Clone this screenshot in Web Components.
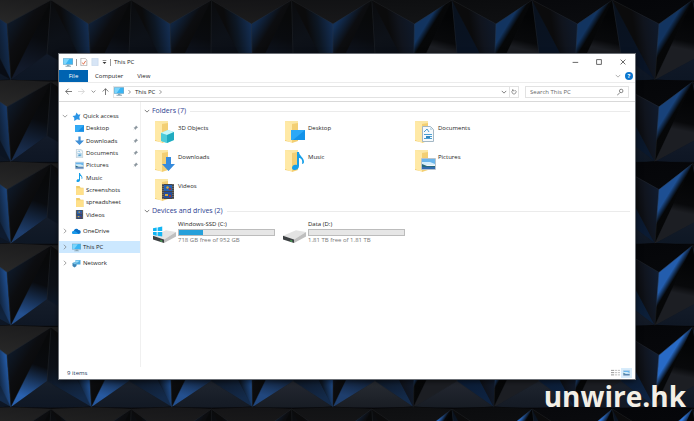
<!DOCTYPE html>
<html lang="en">
<head>
<meta charset="utf-8">
<title>This PC</title>
<style>
html, body { margin: 0; height: 100%; background: #0b0d12; }
body { font: 6px/12px "Open Sans", "Noto Sans", sans-serif; color: #1c1c1c; }
</style>
</head>
<body>
<desk-top></desk-top>
<script>
const define = (name, css, render) => customElements.define(name, class extends HTMLElement {
  connectedCallback() {
    if (this.shadowRoot) return;
    const template = document.createElement('template');
    template.innerHTML = `<style>:host,*{box-sizing:border-box}button,input{font:inherit;color:inherit;margin:0;padding:0;border:0;background:none}button{display:flex;align-items:center;justify-content:center}${css}</style>${render(this)}`;
    this.attachShadow({ mode: 'open' }).append(template.content.cloneNode(true));
  }
});

/* Icons: [viewBox, markup] */
const folder = '<path fill="#f0cc6c" d="M2 1l6 1v20l-6-1z"/><path fill="#fbe7a4" d="M2 1h13v20H8z"/><path fill="#ffe9a6" d="M2 1l7 3v19l-7-3z"/><path fill="#f3cf73" d="M9 4l6-1v18l-6 2z"/>';
const film = '<path fill="#464646" d="M0 0h12v15H0z"/><path fill="#2462b5" d="M2 1h8v6H2z"/><path fill="#244f9b" d="M2 8h8v6H2z"/><path fill="#d7a83b" d="M5 2l2 1-1 2-2-1zM3 10h3v2H3z"/><path fill="#a03535" d="M7 4h2v2H7zM7 11h2v2H7z"/><path stroke="#888" stroke-dasharray="1 1" d="M1 0v15M11 0v15"/>';
const note = '<path fill="#159fe8" d="M5 0h2c0 4 5 5 5 10 0 1-1 2-2 2 1-4-1-6-3-6v8c0 5-7 5-7 2 0-3 3-4 5-3z"/>';
const arrow = '<path fill="#368bdc" d="M4 0h5v7h4l-6.500 7L0 7h4z"/>';
const monitor = '<path fill="#83a8bd" d="M0 0h20v13H0z"/><path fill="#39b5f4" d="M1 1h18v11H1z"/><path fill="#7dd5fb" d="M1 1h12L5 12H1z"/><path fill="#8aa6b5" d="M8 13h5v2h3v2H5v-2h3z"/>';
const landscape = '<path fill="#f4f6f8" stroke="#b9c3ca" d="M.5.5h14v11H.5z"/><path fill="#69b5ec" d="M1 1h13v6H1z"/><path fill="#d5eefa" d="M1 4h8l5 2v1H1z"/><path fill="#28697a" d="M1 6l5 2h8v1H1z"/><path fill="#326cb0" d="M1 9h13v2H1z"/>';
const sheet = '<path fill="#f7fafc" stroke="#a3b7c4" d="M.5.5h8l3 3v12H.5z"/><path fill="#c6dbe7" d="M8 1v3h3z"/><path stroke="#4b9fd2" fill="none" d="M2 6l3-3 2 3M2 8.500h8M6 10.500h4M2 12.500h8"/><path fill="#3187bd" d="M4 10h4v2H4z"/>';
const drive = '<path fill="#e3e3e3" d="M1 9l14-6 11 2-13 8z"/><path fill="#bfbfbf" d="M13 13l13-8v5l-13 7z"/><path fill="#3d4143" d="M1 9l12 4v4L1 13z"/><path fill="#50dd60" d="M9 14l2 .6v1L9 15z"/>';
const at = (x, y, s, m) => `<g transform="translate(${x} ${y}) scale(${s})">${m}</g>`;
const line = (d, c = '#555', w = 1) => `<path fill="none" stroke="${c}" stroke-width="${w}" d="${d}"/>`;
const ICONS = {
  'folder-cube': ['0 0 24 24', folder + '<path fill="#8be8f0" d="M8 13l7-3 6 2v8l-7 3-6-2z"/><path fill="#c5f8fa" d="M8 13l7-3 6 2-7 3z"/><path fill="#20abc0" d="M14 15l7-3v8l-7 3z"/><path fill="#4dccd9" d="M8 13l6 2v8l-6-2z"/>'],
  'folder-desktop': ['0 0 24 24', folder + '<path fill="#1392e9" d="M8 10h14v10H8z"/><path fill="#2ba8f7" d="M8 10h14L10 20H8z"/>'],
  'folder-document': ['0 0 24 24', folder + at(9, 6, 1, sheet)],
  'folder-download': ['0 0 24 24', folder + at(9, 8, 1, arrow)],
  'folder-music': ['0 0 24 24', folder + at(9, 3, 1, note)],
  'folder-picture': ['0 0 24 24', folder + at(8, 9, 1, landscape)],
  'folder-video': ['0 0 24 24', folder + at(9, 6, 1, film)],
  drive: ['2 0 24 24', at(0, 7, 1, drive)],
  'windows-drive': ['2 0 24 24', at(0, 7, 1, drive) + '<path fill="#12b5f3" d="M1 8l4-1v4H1zM6 7l5-1v5H6zM1 12h4v4l-4-1zM6 12h5v5l-5-1z"/>'],
  pc: ['0 0 20 17', monitor],
  star: ['0 0 16 16', '<path fill="#2994e5" d="M8 1l3 4 4-1-2 5 1 5-5-1-5 3 0-6-3-3 5-1z"/>'],
  desktop: ['0 0 16 16', '<path fill="#168ee5" d="M0 2h16v12H0z"/><path fill="#33aaf5" d="M0 2h16L4 14H0z"/>'],
  download: ['0 0 16 16', '<path fill="#3f8fd6" d="M6 1h4v7h6l-8 8-8-8h6z"/>'],
  document: ['0 0 12 16', sheet],
  picture: ['0 0 15 12', landscape],
  music: ['0 0 12 18', note],
  folder: ['0 0 16 16', '<path fill="#f0cb68" d="M2 0h6l2 3h5v13H2z"/><path fill="#ffe08a" d="M2 4h13v12H2z"/>'],
  video: ['0 0 12 15', film],
  cloud: ['0 0 18 12', '<path fill="#0a70c8" d="M4 11a4 4 0 0 1 0-7 5 5 0 0 1 9-1 4 4 0 0 1 1 8z"/><path fill="#1b9ae9" d="M2 11a3 3 0 0 1 2-6c4 0 6 3 10 6z"/>'],
  network: ['0 0 18 16', '<path fill="#4aa9df" d="M7 1h10v9H7z"/><path fill="#9bdcf8" d="M8 2h8L8 8z"/><path fill="#3b83b4" d="M1 7l8-1v7l-4 3-4-3z"/><path fill="#76c2e8" d="M1 7l4-2 6 2-5 3z"/>'],
  pin: ['0 0 10 10', '<path fill="#8b969e" d="M6 0l4 4-2 1-2 2v2L3.500 6.500 0 10l3-4L1 4h2l2-2z"/>'],
  right: ['0 0 8 8', line('M2.500 1L5.500 4 2.500 7')],
  down: ['0 0 8 8', line('M1 2.500L4 5.500 7 2.500')],
  back: ['0 0 10 10', line('M5 1L1 5l4 4M1 5h9', '#444')],
  forward: ['0 0 10 10', line('M5 1l4 4-4 4M9 5H0', '#ccc')],
  up: ['0 0 10 10', line('M1 5l4-4 4 4M5 1v9', '#444')],
  check: ['0 0 12 14', '<path fill="#fff" stroke="#8b8b8b" d="M.5.5H8l3 3v10H.5z"/>' + line('M3 8l2 3 4-6', '#dc5a32', 1.5)],
  page: ['0 0 12 14', '<path fill="#d7e5f6" stroke="#c4d5e9" d="M.5.5h11v13H.5z"/>'],
  customize: ['0 0 8 8', '<path fill="#333" d="M1 1h6v1H1zM1 4h6L4 7z"/>'],
  min: ['0 0 10 10', line('M2 5.500h7', '#444')],
  max: ['0 0 10 10', line('M2 2h6v6H2z', '#444')],
  close: ['0 0 10 10', line('M2 2l6 6M8 2L2 8', '#444')],
  refresh: ['0 0 10 10', line('M7 2a3.500 3.500 0 1 1-4 0M3 0v3h3', '#555')],
  search: ['0 0 10 10', line('M4 6L0 10M6 1a2.500 2.500 0 1 1 0 5 2.500 2.500 0 0 1 0-5z', '#555')],
  details: ['0 0 12 10', line('M0 1.500h4M0 4.500h4M0 7.500h4', '#777') + line('M5 1.500h3M9 1.500h3M5 4.500h3M9 4.500h3M5 7.500h3M9 7.500h3', '#aaa')]
};

define('ui-icon', ':host{display:block;flex:none;width:8px;height:8px}svg{display:block;width:100%;height:100%}', el => {
  const [box, body] = ICONS[el.getAttribute('name')];
  return `<svg viewBox="${box}" aria-hidden="true">${body}</svg>`;
});

/* Wallpaper: a lattice of pyramids lit by a blue light from below. */
define('wall-paper', ':host{display:block}svg{display:block;width:100%;height:100%}', () => {
  const mix = (a, b, t) => 'rgb(' + a.map((v, i) => Math.round(v + (b[i] - v) * t)) + ')';
  const poly = (pts, fill) => `<polygon fill="${fill}" stroke="${fill}" stroke-width=".4" points="${pts.join(' ')}"/>`;
  let out = '', defs = '';
  const A = (c, r) => [51 + 80.2 * c, 81.8 * r];
  const J = (c, r) => [7 + 81.5 * c, 81.8 * r + 24 + r];
  const B = (c, r) => [11 + 80.5 * c, 81.8 * r + 80];
  const C = (c, r) => [47 + 82 * c, 81.8 * r + 54];
  const grad = (id, p, q, stops) => {
    defs += `<linearGradient id="${id}" gradientUnits="userSpaceOnUse" x1="${p[0]}" y1="${p[1]}" x2="${q[0]}" y2="${q[1]}">${stops.map(([o, c]) => `<stop offset="${o}" stop-color="${c}"/>`).join('')}</linearGradient>`;
    return `url(#${id})`;
  };
  for (let r = 0; r < 6; r++) for (let c = -1; c < 10; c++) {
    const k = `${c + 1}_${r}`, x = Math.max(0, Math.min(1, c / 8)), y = r / 5;
    const a = A(c, r), al = A(c - 1, r), j = J(c, r), b = B(c, r), bn = B(c + 1, r), cc = C(c, r);
    const mid = (p, q, t) => [p[0] + (q[0] - p[0]) * t, p[1] + (q[1] - p[1]) * t];
    out += poly([al, B(c, r - 1), a, j], grad('t' + k, B(c, r - 1), j, [[0, mix([29, 29, 30], [5, 6, 9], x)], [1, mix([40, 40, 40], [7, 8, 11], x)]]));
    const blueL = mix([20, 48, 88], [42, 110, 204], y);
    const blueR = mix([18, 52, 96], [46, 120, 224], y);
    const soft = mix([15, 26, 44], [18, 32, 56], y);
    out += poly([al, j, b], grad('l' + k, [j[0] - 24, j[1] + 12], [j[0] + 2, j[1] + 8],
      [[0, '#0b0b0c'], [.4, x > .6 ? '#10141d' : '#0d1724'], [1, x > .6 ? soft : blueL]]));
    out += poly([j, a, b], grad('r' + k, [j[0] - 2, j[1] + 8], [j[0] + 24, j[1] + 24],
      x > .5 ? [[0, blueR], [.25, blueR], [.45, '#060708'], [1, '#050607']] : [[0, mix([14, 24, 38], [18, 48, 88], x * 2)], [.5, '#0c0d10'], [1, '#090909']]));
    out += poly([a, b, cc], grad('m' + k, mid(a, b, .2), mid(cc, b, .6),
      x > .5 ? [[0, '#030405'], [.45, '#08090b'], [.6, '#1c1e23'], [1, '#1c1e23']]
             : [[0, '#08090a'], [.4, '#090b0f'], [1, mix([18, 26, 42], [48, 116, 210], y * (1 - x))]]));
    out += poly([a, cc, bn], grad('n' + k, a, mid(cc, bn, .7),
      x > .5 ? [[0, '#09111c'], [1, mix([9, 20, 38], [14, 38, 70], y)]] : [[0, '#0a0b0d'], [.5, '#0d1118'], [1, mix([8, 12, 20], [22, 50, 88], y)]]));
    const mc = Math.max(0, 1 - Math.abs(c - 4) / 5);
    out += poly([b, cc, bn], grad('c' + k, cc, [cc[0], cc[1] + 26],
      [[0, mix([18, 26, 40], [46, 48, 54], mc * y)], [1, mix([13, 22, 36], [28, 31, 36], mc * y)]]));
    out += `<path fill="none" stroke="#3a3d42" stroke-opacity=".35" stroke-width=".7" d="M${al}L${j}L${a}L${cc}M${j}L${b}"/>`;
    out += `<path fill="none" stroke="#020304" stroke-opacity=".8" stroke-width="1.2" d="M${b}Q${cc[0]},${b[1] + 3} ${bn}"/>`;
  }
  return `<svg viewBox="0 0 694 421" preserveAspectRatio="xMidYMid slice" aria-hidden="true"><defs>${defs}</defs>${out}</svg>`;
});

define('title-bar', `
  :host{display:flex;align-items:center;height:16px;padding:0 0 0 4px;gap:3px}
  button{width:24px;height:16px}
  .quick{width:8px;height:12px}
  .quick.last{width:5px}
  .last ui-icon{width:5px}
  i{width:1px;height:7px;background:#999}
  h1{font:inherit;margin:0;flex:1}
  .pc{width:10px;height:9px}
  nav{display:flex}
`, () => `<ui-icon class="pc" name="pc"></ui-icon><i></i>
  <button class="quick" aria-label="Properties"><ui-icon name="check"></ui-icon></button>
  <button class="quick" aria-label="New folder"><ui-icon name="page"></ui-icon></button>
  <button class="quick last" aria-label="Customize toolbar"><ui-icon name="customize"></ui-icon></button><i></i>
  <h1>This PC</h1>
  <nav><button aria-label="Minimize"><ui-icon name="min"></ui-icon></button><button aria-label="Maximize"><ui-icon name="max"></ui-icon></button><button aria-label="Close"><ui-icon name="close"></ui-icon></button></nav>`);

define('ribbon-tabs', `
  :host{display:flex;align-items:center;height:12px}
  button{height:12px;padding:0 7px}
  .file{background:#0063b1;color:#fff;width:29px;padding:0}
  .fold{margin-left:auto;padding:0 4px}
  .fold ui-icon{width:6px;opacity:.6}
  .help{width:8px;height:8px;padding:0;margin-right:2px;border-radius:50%;background:#0b75ce;color:#fff;font-weight:700}
`, () => `<button class="file">File</button><button>Computer</button><button>View</button>
  <button class="fold" aria-label="Collapse ribbon"><ui-icon name="down"></ui-icon></button><button class="help" aria-label="Help">?</button>`);

define('address-bar', `
  :host{display:flex;align-items:center;height:20px;padding:0 6px 1px;border-top:1px solid #ececec;border-bottom:1px solid #d9d9d9}
  button{height:12px}
  .arrows{display:flex;gap:6px;width:48px;align-items:center}
  .arrows ui-icon{width:7px;height:7px}
  .arrows .small{width:5px}
  .path{display:flex;align-items:center;flex:1;height:12px;border:1px solid #e2e2e2}
  .path .pc{width:10px;height:9px}
  .sep{width:5px;margin:0 3px}
  .drop{margin-left:auto;padding:0 2px}
  .refresh{padding:0 1px;border-left:1px solid #e2e2e2;height:10px}
  .drop ui-icon,.refresh ui-icon{width:6px}
  label{display:flex;align-items:center;width:104px;height:12px;border:1px solid #e2e2e2;margin-left:6px;padding:0 4px}
  input{flex:1;width:0;outline:0}
  input::placeholder{color:#666;opacity:1}
  label ui-icon{width:7px}
`, () => `<div class="arrows"><button aria-label="Back"><ui-icon name="back"></ui-icon></button><button aria-label="Forward"><ui-icon name="forward"></ui-icon></button><button aria-label="Recent"><ui-icon class="small" name="down"></ui-icon></button><button aria-label="Up"><ui-icon name="up"></ui-icon></button></div>
  <div class="path"><ui-icon class="pc" name="pc"></ui-icon><ui-icon class="sep" name="right"></ui-icon><button>This PC</button><ui-icon class="sep" name="right"></ui-icon>
  <button class="drop" aria-label="Previous locations"><ui-icon name="down"></ui-icon></button><button class="refresh" aria-label="Refresh"><ui-icon name="refresh"></ui-icon></button></div>
  <label><input type="text" placeholder="Search This PC" aria-label="Search This PC"><ui-icon name="search"></ui-icon></label>`);

define('nav-item', `
  :host{display:block}
  a{display:flex;align-items:center;height:100%;color:inherit;text-decoration:none;padding:0 2px 0 3px;gap:2px;white-space:nowrap}
  .chev{width:6px;height:6px;margin-right:2px;opacity:.7}
  :host([child]) a{padding-left:16px}
  :host([selected]) a{background:#cce8ff}
  .ico{width:9px;height:9px}
  .pin{width:5px;height:6px;margin-left:auto}
`, el => `<a href="#">${el.hasAttribute('child') ? '' : `<ui-icon class="chev" name="${el.hasAttribute('open') ? 'down' : 'right'}"></ui-icon>`}<ui-icon class="ico" name="${el.getAttribute('icon')}"></ui-icon><slot></slot>${el.hasAttribute('pinned') ? '<ui-icon class="pin" name="pin"></ui-icon>' : ''}</a>`);

define('nav-pane', `
  :host{display:flex;flex-direction:column;gap:4px;width:82px;flex:none;padding-top:8px;border-right:1px solid #f0f0f0}
  nav{display:grid;grid-auto-rows:1fr;height:111px}
  nav~nav{height:auto;grid-auto-rows:12px}
`, () => `<nav aria-label="Quick access">
    <nav-item icon="star" open>Quick access</nav-item>
    <nav-item child icon="desktop" pinned>Desktop</nav-item>
    <nav-item child icon="download" pinned>Downloads</nav-item>
    <nav-item child icon="document" pinned>Documents</nav-item>
    <nav-item child icon="picture" pinned>Pictures</nav-item>
    <nav-item child icon="music">Music</nav-item>
    <nav-item child icon="folder">Screenshots</nav-item>
    <nav-item child icon="folder">spreadsheet</nav-item>
    <nav-item child icon="video">Videos</nav-item>
  </nav>
  <nav><nav-item icon="cloud">OneDrive</nav-item></nav>
  <nav><nav-item icon="pc" selected>This PC</nav-item></nav>
  <nav><nav-item icon="network">Network</nav-item></nav>`);

define('item-group', `
  :host{display:block}
  h2{display:flex;align-items:center;gap:4px;margin:0;font:inherit;font-size:7px;line-height:12px;color:#2c3e8f;padding-left:1px}
  h2 ui-icon{width:6px;margin-right:-2px}
  h2::after{content:"";flex:1;height:1px;background:#ebebeb}
  div{display:grid;grid-template-columns:repeat(auto-fill,130px);grid-auto-rows:29px;padding:3px 0 0 10px}
`, el => `<h2><ui-icon name="down"></ui-icon>${el.getAttribute('label')}</h2><div><slot></slot></div>`);

define('folder-tile', `
  :host{display:flex;gap:1px}
  ui-icon{width:24px;height:24px}
  span{padding-top:2px}
`, el => `<ui-icon name="${el.getAttribute('icon')}"></ui-icon><span><slot></slot></span>`);

define('drive-tile', `
  :host{display:flex;gap:1px}
  ui-icon{width:24px;height:24px}
  svg{overflow:visible}
  div{flex:none;width:97px}
  span{display:block;line-height:8px}
  .bar{height:7px;margin-top:1px;border:1px solid #bcbcbc;background:#e6e6e6}
  .bar b{display:block;height:100%;background:#26a0da}
  .free{color:#777;line-height:9px}
`, el => `<ui-icon name="${el.getAttribute('icon')}"></ui-icon><div><span><slot></slot></span><div class="bar"><b style="width:${el.getAttribute('used')}%"></b></div><span class="free">${el.getAttribute('free')}</span></div>`);
ICONS.drive[0] = ICONS['windows-drive'][0] = '1 0 26 24';

define('status-bar', `
  :host{display:flex;align-items:center;height:12px;padding:0 3px 0 8px;color:#1e395b}
  span{flex:1}
  button{width:11px;height:10px}
  ui-icon{width:9px}
  .on{background:#d8ecfb}
  .on ui-icon{width:7px}
`, () => `<span>9 items</span><button aria-label="Details"><ui-icon name="details"></ui-icon></button><button class="on" aria-label="Large icons"><ui-icon name="picture"></ui-icon></button>`);

define('explorer-window', `
  :host{display:flex;flex-direction:column;background:#fff;box-shadow:0 0 0 1px #6b6f75,0 2px 6px #000a}
  .body{display:flex;flex:1;min-height:0}
  main{flex:1;min-width:0;padding:3px 5px 0 2px}
  item-group+item-group{margin-top:-2px}
`, () => `<title-bar></title-bar><ribbon-tabs></ribbon-tabs><address-bar></address-bar>
  <div class="body"><nav-pane></nav-pane><main>
    <item-group label="Folders (7)">
      <folder-tile icon="folder-cube">3D Objects</folder-tile>
      <folder-tile icon="folder-desktop">Desktop</folder-tile>
      <folder-tile icon="folder-document">Documents</folder-tile>
      <folder-tile icon="folder-download">Downloads</folder-tile>
      <folder-tile icon="folder-music">Music</folder-tile>
      <folder-tile icon="folder-picture">Pictures</folder-tile>
      <folder-tile icon="folder-video">Videos</folder-tile>
    </item-group>
    <item-group label="Devices and drives (2)">
      <drive-tile icon="windows-drive" used="25" free="718 GB free of 952 GB">Windows-SSD (C:)</drive-tile>
      <drive-tile icon="drive" used="0" free="1.81 TB free of 1.81 TB">Data (D:)</drive-tile>
    </item-group>
  </main></div><status-bar></status-bar>`);

define('desk-top', `
  :host{position:relative;display:flex;min-height:100vh;padding:54px 59px 42px}
  wall-paper{position:absolute;inset:0}
  explorer-window{position:relative;flex:1}
  .mark{position:absolute;right:8px;bottom:9px;font-size:28px;line-height:32px;font-weight:700;color:#f3efe6}
`, () => `<wall-paper></wall-paper><explorer-window></explorer-window><span class="mark">unwire.hk</span>`);
</script>
</body>
</html>
